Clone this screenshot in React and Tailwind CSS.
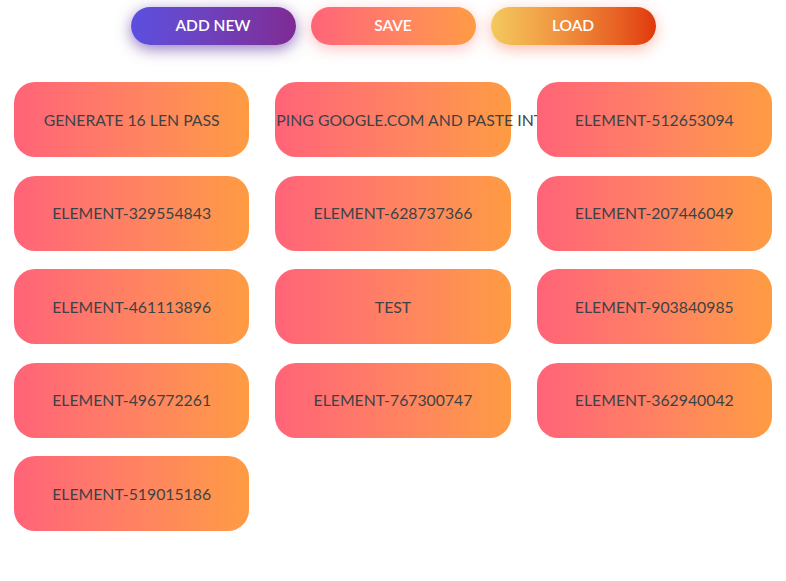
import React from "react";

const elements = [
  "GENERATE 16 LEN PASS",
  "PING GOOGLE.COM AND PASTE INTO CLIPBOARD",
  "ELEMENT-512653094",
  "ELEMENT-329554843",
  "ELEMENT-628737366",
  "ELEMENT-207446049",
  "ELEMENT-461113896",
  "TEST",
  "ELEMENT-903840985",
  "ELEMENT-496772261",
  "ELEMENT-767300747",
  "ELEMENT-362940042",
  "ELEMENT-519015186",
];

const App = () => {
  return (
    <div className="min-h-[581px] bg-white font-['Lato','Noto_Sans',sans-serif]">
      {/* top action buttons */}
      <div className="flex justify-center gap-[15px] pt-[7px]">
        <button className="w-[165px] h-[38px] rounded-full bg-gradient-to-r from-[#5b4fe0] to-[#7e2a94] text-white text-[15.5px] font-semibold shadow-[0_4px_15px_0_rgba(116,79,168,0.75)]">
          ADD NEW
        </button>
        <button className="w-[165px] h-[38px] rounded-full bg-gradient-to-r from-[#ff6478] to-[#ff9b44] text-white text-[15.5px] font-semibold shadow-[0_4px_15px_0_rgba(255,110,110,0.4)]">
          SAVE
        </button>
        <button className="w-[165px] h-[38px] rounded-full bg-gradient-to-r from-[#f3c95e] to-[#e0370a] text-white text-[15.5px] font-semibold shadow-[0_4px_15px_0_rgba(235,90,50,0.4)]">
          LOAD
        </button>
      </div>

      {/* element cards */}
      <div className="grid grid-cols-3 gap-x-[26px] gap-y-[18.5px] px-[14px] pt-[37px]">
        {elements.map((name) => (
          <div
            key={name}
            className="h-[75px] rounded-[21px] bg-gradient-to-r from-[#ff6378] to-[#fe9b42] flex items-center px-px"
          >
            <p className="w-full text-center whitespace-nowrap text-[15.8px] text-[#3d4246]">{name}</p>
          </div>
        ))}
      </div>
    </div>
  );
};

export default App;
